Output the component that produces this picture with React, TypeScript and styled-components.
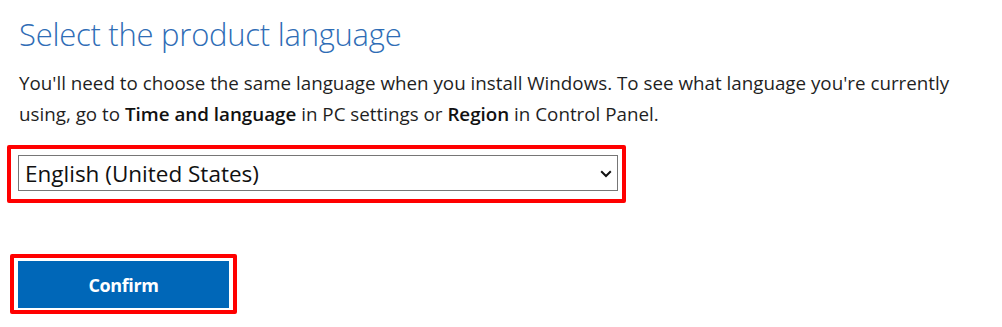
import React from 'react';
import styled, { createGlobalStyle } from 'styled-components';

const GlobalStyle = createGlobalStyle`
  html, body {
    margin: 0;
    padding: 0;
    background: #ffffff;
  }
`;

const Page = styled.div`
  display: flex;
  flex-direction: column;
  align-items: flex-start;
  padding: 12px 0 0 19px;
  font-family: 'Open Sans', 'Noto Sans', sans-serif;
  color: #262626;
`;

const Title = styled.h1`
  margin: 0;
  font-size: 31px;
  font-weight: 300;
  line-height: 44px;
  color: #2f6db6;
  letter-spacing: -0.25px;
`;

const Lead = styled.p`
  margin: 12px 0 0;
  width: 962px;
  font-size: 18.8px;
  line-height: 31px;
  color: #1f1f1f;

  strong {
    font-weight: 600;
    color: #111111;
  }
`;

const Highlight = styled.div<{ $offset: number; $pad: string; $gap: number }>`
  margin-left: ${(p) => -p.$offset}px;
  margin-top: ${(p) => p.$gap}px;
  padding: ${(p) => p.$pad};
  border: 4px solid #ff0000;
  border-radius: 2px;
`;

const SelectWrap = styled.div`
  position: relative;
  width: 600px;
  height: 36px;
`;

const Select = styled.select`
  appearance: none;
  width: 100%;
  height: 100%;
  margin: 0;
  padding: 0 32px 0 6px;
  border: 1px solid #767676;
  border-radius: 0;
  background: #ffffff;
  font-family: 'Open Sans', 'Noto Sans', sans-serif;
  font-size: 22.5px;
  color: #111111;
  outline: none;
`;

const Chevron = styled.svg`
  position: absolute;
  right: 6px;
  top: 15px;
  pointer-events: none;
`;

const ConfirmButton = styled.button`
  width: 211px;
  height: 47px;
  border: none;
  background: #0067b8;
  color: #ffffff;
  font-family: 'Open Sans', 'Noto Sans', sans-serif;
  font-size: 18px;
  font-weight: 700;
  letter-spacing: -0.4px;
  cursor: pointer;
`;

export default function App() {
  return (
    <>
      <GlobalStyle />
      <Page>
        <Title>Select the product language</Title>
        <Lead>
          You'll need to choose the same language when you install Windows. To see what language you're
          currently using, go to <strong>Time and language</strong> in PC settings or <strong>Region</strong> in
          Control Panel.
        </Lead>
        <Highlight $offset={12} $pad='6px 4px 8px 7px' $gap={15}>
          <SelectWrap>
            <Select defaultValue='en-us'>
              <option value='en-us'>English (United States)</option>
            </Select>
            <Chevron width='12' height='8' viewBox='0 0 12 8'>
              <path d='M1.2 1.3 L6 6 L10.8 1.3' fill='none' stroke='#111' strokeWidth='2' />
            </Chevron>
          </SelectWrap>
        </Highlight>
        <Highlight $offset={9} $pad='3px 4px 2px 4px' $gap={51}>
          <ConfirmButton>Confirm</ConfirmButton>
        </Highlight>
      </Page>
    </>
  );
}
